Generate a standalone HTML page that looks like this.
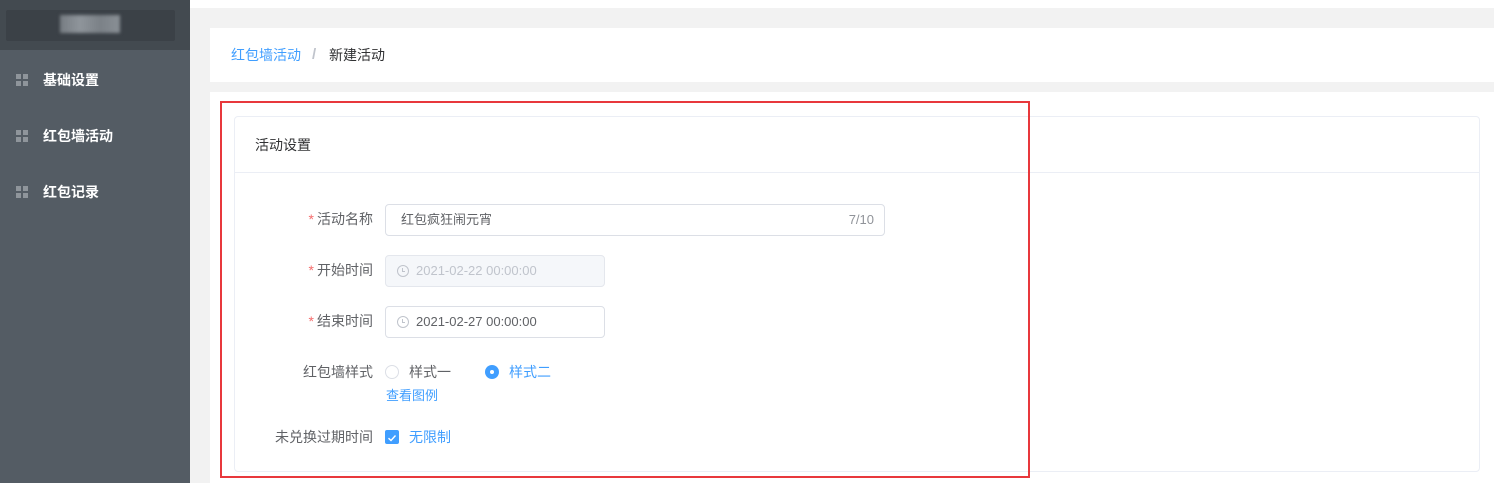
<!DOCTYPE html>
<html><head><meta charset="utf-8"><style>
*{margin:0;padding:0;box-sizing:border-box}
body{width:1494px;height:483px;overflow:hidden;background:#f2f2f2;font-family:"Liberation Sans","Noto Sans CJK SC",sans-serif;font-size:14px;line-height:20px;color:#606266;position:relative}
.abs{position:absolute}
.side{left:0;top:0;width:190px;height:483px;background:#545c64}
.logo{left:0;top:0;width:190px;height:50px;background:#434a50}
.logobox{left:6px;top:10px;width:169px;height:31px;background:#3b4147;border-radius:2px}
.blur{left:60px;top:15px;width:60px;height:18px;background:linear-gradient(90deg,#777d83,#8f959b,#7b8187,#8a9096);filter:blur(1.5px)}
.mi{left:16px;color:#fff;font-size:14px;font-weight:bold;display:flex;align-items:center}
.ic{display:grid;grid-template-columns:5px 5px;gap:2px;margin-right:15px}
.ic i{width:5px;height:5px;background:#8f959b;display:block}
.top{left:190px;top:0;width:1304px;height:8px;background:#fff}
.bc{left:210px;top:28px;width:1284px;height:54px;background:#fff}
.card{left:210px;top:92px;width:1284px;height:391px;background:#fff}
.inner{left:234px;top:116px;width:1246px;height:356px;border:1px solid #ebeef5;border-radius:4px}
.hd{left:234px;top:172px;width:1246px;height:1px;background:#ebeef5}
.red{left:220px;top:101px;width:810px;height:377px;border:2px solid #e8383c}
.lbl{width:150px;text-align:right;left:223px}
.star{color:#f56c6c;margin-right:3px}
.inp{border:1px solid #dcdfe6;border-radius:4px;height:32px;background:#fff;display:flex;align-items:center;font-size:13px}
.clk{display:inline-block;width:12px;height:12px;border:1px solid #c0c4cc;border-radius:50%;margin-right:7px;position:relative}
.clk:after{content:"";position:absolute;left:4px;top:2px;width:2px;height:3px;border-left:1px solid #c0c4cc;border-bottom:1px solid #c0c4cc}
</style></head><body>
<div class="abs top"></div>
<div class="abs side"></div>
<div class="abs logo"></div>
<div class="abs logobox"></div>
<div class="abs blur"></div>
<div class="abs mi" style="top:70px"><span class="ic"><i></i><i></i><i></i><i></i></span>基础设置</div>
<div class="abs mi" style="top:126px"><span class="ic"><i></i><i></i><i></i><i></i></span>红包墙活动</div>
<div class="abs mi" style="top:182px"><span class="ic"><i></i><i></i><i></i><i></i></span>红包记录</div>
<div class="abs bc"></div>
<div class="abs" style="left:231px;top:45px;color:#409eff">红包墙活动</div>
<div class="abs" style="left:312px;top:45px;color:#c0c4cc;font-size:15px;font-weight:bold">/</div>
<div class="abs" style="left:329px;top:45px;color:#303133">新建活动</div>
<div class="abs card"></div>
<div class="abs inner"></div>
<div class="abs hd"></div>
<div class="abs" style="left:255px;top:135px;color:#303133">活动设置</div>
<div class="abs lbl" style="top:209px"><span class="star">*</span>活动名称</div>
<div class="abs inp" style="left:385px;top:204px;width:500px;padding-left:15px;color:#606266">红包疯狂闹元宵<span style="margin-left:auto;margin-right:10px;color:#909399;font-size:13px">7/10</span></div>
<div class="abs lbl" style="top:260px"><span class="star">*</span>开始时间</div>
<div class="abs inp" style="left:385px;top:255px;width:220px;padding-left:11px;background:#f5f7fa;border-color:#e4e7ed;color:#c0c4cc"><span class="clk"></span>2021-02-22 00:00:00</div>
<div class="abs lbl" style="top:311px"><span class="star">*</span>结束时间</div>
<div class="abs inp" style="left:385px;top:306px;width:220px;padding-left:11px;color:#606266"><span class="clk"></span>2021-02-27 00:00:00</div>
<div class="abs lbl" style="top:362px">红包墙样式</div>
<div class="abs" style="left:385px;top:365px;width:14px;height:14px;border:1px solid #dcdfe6;border-radius:50%"></div>
<div class="abs" style="left:409px;top:362px">样式一</div>
<div class="abs" style="left:485px;top:365px;width:14px;height:14px;background:#409eff;border-radius:50%"><i style="position:absolute;left:5px;top:5px;width:4px;height:4px;background:#fff;border-radius:50%"></i></div>
<div class="abs" style="left:509px;top:362px;color:#409eff">样式二</div>
<div class="abs" style="left:386px;top:386px;color:#409eff;font-size:13px">查看图例</div>
<div class="abs lbl" style="top:427px">未兑换过期时间</div>
<div class="abs" style="left:385px;top:430px;width:14px;height:14px;background:#409eff;border-radius:2px"><svg width="14" height="14"><path d="M3.5 7.2 L6 9.5 L10.5 4.5" stroke="#fff" stroke-width="1.4" fill="none"/></svg></div>
<div class="abs" style="left:409px;top:427px;color:#409eff">无限制</div>
<div class="abs red"></div>
</body></html>
